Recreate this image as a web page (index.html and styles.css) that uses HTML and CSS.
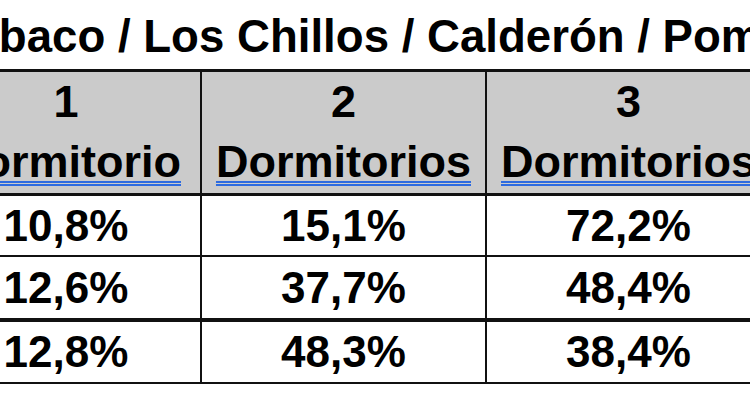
FILE: index.html
```html
<!DOCTYPE html>
<html lang="es">
<head>
<meta charset="utf-8">
<title>Dormitorios</title>
<link rel="stylesheet" href="styles.css">
</head>
<body>
<div class="page">
  <h1 class="title">Tumbaco / Los Chillos / Calderón / Pomasqui</h1>
  <div class="sheet">
    <div class="row head">
      <div class="cell"><span class="n">1</span><span class="u">Dormitorio</span></div>
      <div class="cell"><span class="n">2</span><span class="u">Dormitorios</span></div>
      <div class="cell"><span class="n">3</span><span class="u">Dormitorios</span></div>
    </div>
    <div class="row r1">
      <div class="cell">10,8%</div>
      <div class="cell">15,1%</div>
      <div class="cell">72,2%</div>
    </div>
    <div class="row r2">
      <div class="cell">12,6%</div>
      <div class="cell">37,7%</div>
      <div class="cell">48,4%</div>
    </div>
    <div class="row r3">
      <div class="cell">12,8%</div>
      <div class="cell">48,3%</div>
      <div class="cell">38,4%</div>
    </div>
  </div>
</div>
</body>
</html>
```
FILE: styles.css
```css
html, body {
  margin: 0;
  padding: 0;
  background: #ffffff;
}

body {
  width: 750px;
  height: 400px;
  overflow: hidden;
  font-family: "Liberation Sans", Arial, Helvetica, sans-serif;
  font-weight: bold;
  color: #000000;
}

.page {
  padding-top: 14px;
}

.title {
  margin: 0 0 10px -94px;
  font-size: 45.6px;
  line-height: 45px;
  font-weight: bold;
  white-space: nowrap;
}

.sheet {
  margin-left: -70px;
  width: 842px;
  border-top: 3px solid #111111;
  border-left: 2px solid #111111;
}

.row {
  display: grid;
  grid-template-columns: 270px 285px 285px;
}

.cell {
  box-sizing: border-box;
  border-right: 2px solid #111111;
  text-align: center;
  white-space: nowrap;
  font-size: 44px;
}

.head {
  background: #cbcbcb;
  border-bottom: 3px solid #111111;
}

.head .cell {
  display: flex;
  flex-direction: column;
  align-items: center;
  font-size: 45px;
  line-height: 60px;
  padding-bottom: 1px;
}

.u {
  text-decoration-line: underline;
  text-decoration-style: double;
  text-decoration-color: #2d6be0;
  text-decoration-thickness: 1.5px;
  text-underline-offset: 4px;
}

.r1 {
  line-height: 59px;
  border-bottom: 2px solid #111111;
}

.r2 {
  line-height: 61px;
  border-bottom: 4px solid #111111;
}

.r3 {
  line-height: 60px;
  border-bottom: 2px solid #111111;
}
```
